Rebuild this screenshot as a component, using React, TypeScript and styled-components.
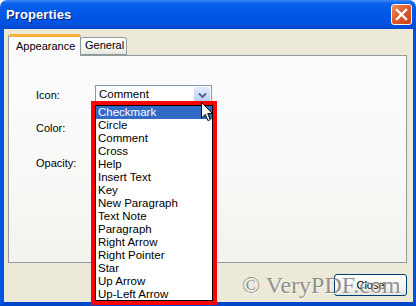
import React from 'react';
import styled, { createGlobalStyle } from 'styled-components';

const GlobalStyle = createGlobalStyle`
    html, body {
        margin: 0;
        padding: 0;
        background: #ffffff;
    }
    body {
        width: 416px;
        height: 306px;
        overflow: hidden;
        font-family: "Liberation Sans", Arial, sans-serif;
    }
`;

// Window chrome
const Window = styled.div`
    position: relative;
    width: 416px;
    height: 306px;
    display: flex;
    flex-direction: column;
    overflow: hidden;
`;

const TitleBar = styled.div`
    height: 29px;
    flex: none;
    display: flex;
    align-items: center;
    justify-content: space-between;
    padding: 0 4px 0 6px;
    border-radius: 7px 7px 0 0;
    background: linear-gradient(180deg, #3b8cf5 0%, #0a62ef 12%, #0058e6 40%, #0055e3 75%, #0049cf 100%);
`;

const Title = styled.span`
    color: #ffffff;
    font: bold 13px "Liberation Sans", Arial, sans-serif;
    text-shadow: 1px 1px 0 #0a1f7a;
    letter-spacing: 0.1px;
`;

const CloseX = styled.div`
    width: 19px;
    height: 19px;
    border: 1px solid #ffffff;
    border-radius: 3px;
    background: linear-gradient(135deg, #f0905c 0%, #e25a2b 45%, #c9411a 100%);
    display: flex;
    align-items: center;
    justify-content: center;
`;

const Frame = styled.div`
    flex: 1;
    display: flex;
    border-left: 4px solid #0055e5;
    border-right: 3px solid #0050d8;
    border-bottom: 4px solid #0046c8;
`;

const Client = styled.div`
    flex: 1;
    display: flex;
    flex-direction: column;
    background: #ece9d8;
    padding: 5px 6px 0 4px;
`;

// Tabs
const TabStrip = styled.div`
    height: 21px;
    display: flex;
    align-items: flex-end;
    position: relative;
    z-index: 1;
`;

const Tab = styled.div<{ $active?: boolean }>`
    box-sizing: border-box;
    height: ${p => p.$active ? '22px' : '18px'};
    margin-bottom: ${p => p.$active ? '-1px' : '0'};
    width: ${p => p.$active ? '73px' : '46px'};
    padding: ${p => p.$active ? '3px 0 0 7px' : '1px 0 0 4px'};
    border: 1px solid #919b9c;
    border-bottom: ${p => p.$active ? 'none' : '1px solid #919b9c'};
    border-top: ${p => p.$active ? '3px solid #f7b03a' : '1px solid #919b9c'};
    border-left: ${p => p.$active ? '1px solid #919b9c' : 'none'};
    border-radius: 3px 3px 0 0;
    background: ${p => p.$active ? '#fcfcfe' : 'linear-gradient(180deg, #ffffff 0%, #f3f3ef 70%, #e6e5df 100%)'};
    font-size: 11px;
    color: #000;
`;

const Panel = styled.div`
    box-sizing: border-box;
    height: 208px;
    border: 1px solid #919b9c;
    background: linear-gradient(180deg, #fcfcfe 0%, #f8f8f6 60%, #f3f2ec 100%);
    padding: 29px 0 0 27px;
`;

const Field = styled.div<{ $top: number }>`
    display: flex;
    align-items: center;
    height: 20px;
    margin-top: ${p => p.$top}px;
`;

const Label = styled.span`
    width: 59px;
    font-size: 11px;
    color: #000;
`;

const Combo = styled.div`
    box-sizing: border-box;
    width: 117px;
    height: 21px;
    border: 1px solid #7f9db9;
    background: #fff;
    display: flex;
    align-items: flex-start;
    justify-content: space-between;
    padding: 1px 1px 0 3px;
    font-size: 11.5px;
`;

const ComboText = styled.span`
    line-height: 15px;
`;

const ComboButton = styled.div`
    width: 16px;
    height: 17px;
    border-radius: 2px;
    background: linear-gradient(180deg, #e3ebfd 0%, #c6d6fb 60%, #b6c9f6 100%);
    display: flex;
    align-items: center;
    justify-content: center;
`;

const Footer = styled.div`
    display: flex;
    justify-content: flex-end;
    padding-top: 11px;
`;

const Button = styled.div`
    box-sizing: border-box;
    width: 73px;
    height: 22px;
    border: 1px solid #003c74;
    border-radius: 3px;
    background: linear-gradient(180deg, #ffffff 0%, #f4f4f0 60%, #e3e2db 100%);
    display: flex;
    align-items: center;
    justify-content: center;
    font-size: 11px;
    color: #000;
`;

// Dropdown list (open overlay, with red highlight frame)
const Highlight = styled.div`
    position: absolute;
    left: 91px;
    top: 101px;
    box-sizing: border-box;
    width: 126px;
    height: 204px;
    border: 4px solid #ff0000;
    z-index: 3;
`;

const List = styled.ul`
    box-sizing: border-box;
    height: 100%;
    margin: 0;
    padding: 0;
    list-style: none;
    background: #ffffff;
    border: 1px solid #000000;
`;

const Item = styled.li<{ $selected?: boolean }>`
    height: 13px;
    line-height: 13px;
    padding-left: 2px;
    font-size: 11.5px;
    white-space: nowrap;
    background: ${p => p.$selected ? '#316ac5' : 'transparent'};
    color: ${p => p.$selected ? '#ffffff' : '#000000'};
`;

const Cursor = styled.svg`
    position: absolute;
    left: 201px;
    top: 102px;
    z-index: 5;
`;

const Watermark = styled.div`
    position: absolute;
    left: 242px;
    top: 272px;
    z-index: 4;
    font: 24px "Liberation Serif", "Times New Roman", serif;
    color: rgba(105, 105, 105, 0.72);
    text-shadow: 1px 1px 0 rgba(255, 255, 255, 0.7);
    white-space: nowrap;
`;

const icons = [
    'Checkmark', 'Circle', 'Comment', 'Cross', 'Help', 'Insert Text', 'Key',
    'New Paragraph', 'Text Note', 'Paragraph', 'Right Arrow', 'Right Pointer',
    'Star', 'Up Arrow', 'Up-Left Arrow',
];

export default function App() {
    return (
        <>
            <GlobalStyle />
            <Window>
                <TitleBar>
                    <Title>Properties</Title>
                    <CloseX>
                        <svg width="13" height="13" viewBox="0 0 13 13">
                            <path d="M2 2 L11 11 M11 2 L2 11" stroke="#ffffff" strokeWidth="2.4" strokeLinecap="square" />
                        </svg>
                    </CloseX>
                </TitleBar>
                <Frame>
                    <Client>
                        <TabStrip>
                            <Tab $active>Appearance</Tab>
                            <Tab>General</Tab>
                        </TabStrip>
                        <Panel>
                            <Field $top={0}>
                                <Label>Icon:</Label>
                                <Combo>
                                    <ComboText>Comment</ComboText>
                                    <ComboButton>
                                        <svg width="9" height="7" viewBox="0 0 9 7">
                                            <path d="M1 1.5 L4.5 5 L8 1.5" fill="none" stroke="#4d6185" strokeWidth="1.8" />
                                        </svg>
                                    </ComboButton>
                                </Combo>
                            </Field>
                            <Field $top={13}>
                                <Label>Color:</Label>
                            </Field>
                            <Field $top={15}>
                                <Label>Opacity:</Label>
                            </Field>
                        </Panel>
                        <Footer>
                            <Button>Close</Button>
                        </Footer>
                    </Client>
                </Frame>

                <Highlight>
                    <List>
                        {icons.map((name, i) => (
                            <Item key={name} $selected={i === 0}>{name}</Item>
                        ))}
                    </List>
                </Highlight>

                <Cursor width="13" height="20" viewBox="0 0 13 20">
                    <path d="M0.5 0.5 L0.5 16 L4.3 12.4 L6.9 18.6 L9.2 17.6 L6.7 11.6 L11.6 11.6 Z" fill="#ffffff" stroke="#000000" strokeWidth="1" />
                </Cursor>

                <Watermark>© VeryPDF.com</Watermark>
            </Window>
        </>
    );
}
